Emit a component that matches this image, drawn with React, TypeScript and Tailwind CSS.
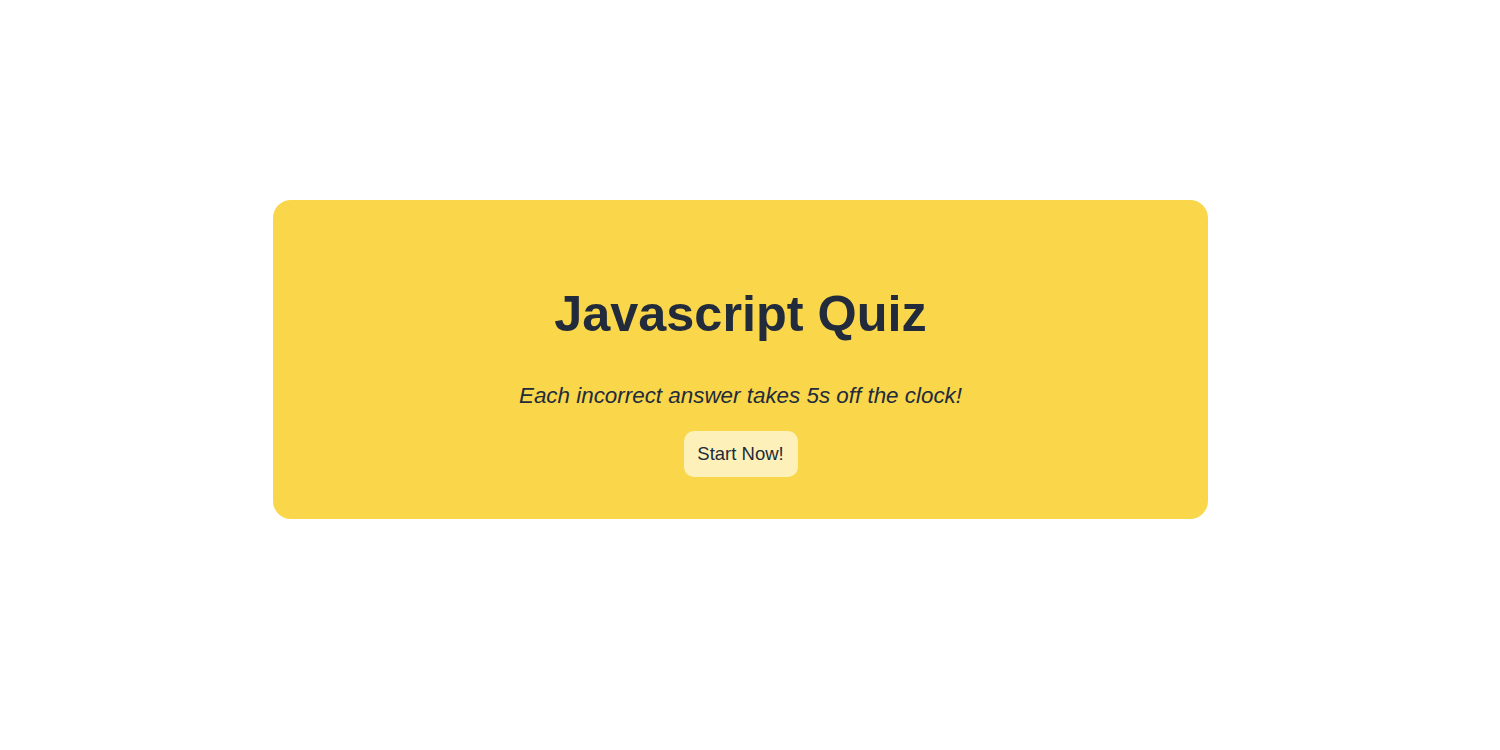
import React from 'react';

export default function App() {
  return (
    <div className="min-h-[750px] bg-white pt-[200px] font-['Liberation_Sans',Arial,sans-serif] text-[#222b3b]">
      <div className="ml-[273px] w-[935px] h-[319px] rounded-[18px] bg-[#f9d64a] flex flex-col items-center pt-[85px]">
        <h1 className="text-[50.4px] leading-[58px] font-bold">Javascript Quiz</h1>
        <p className="mt-[39px] text-[22.4px] leading-[28px] italic">Each incorrect answer takes 5s off the clock!</p>
        <button className="mt-[21px] h-[46px] w-[114px] rounded-[10px] bg-[#fdf1b9] text-[18.5px] flex items-center justify-center">
          Start Now!
        </button>
      </div>
    </div>
  );
}
